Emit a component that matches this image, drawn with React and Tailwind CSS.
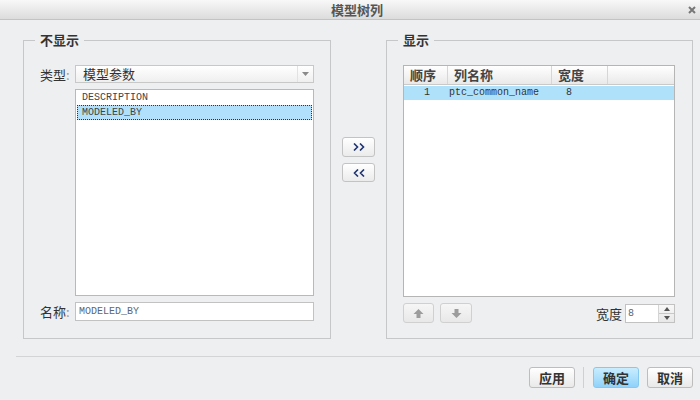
import React from 'react';

const cjk = "font-['Noto_Sans_CJK_SC','Liberation_Sans',sans-serif]";
const mono = "font-['Liberation_Mono','Noto_Sans_CJK_SC',monospace]";

const ArrowIcon = ({ down }) => (
  <svg width="11" height="11" viewBox="0 0 11 11" className={down ? 'rotate-180' : ''}>
    <path d="M5.5 1 L10.5 6 H7.5 V10 H3.5 V6 H0.5 Z" fill="#9c9c9c" />
  </svg>
);

const Button = ({ children, primary = false }) => (
  <button
    className={`h-[21px] w-[46px] rounded-[3px] border text-[13px] font-bold leading-none ${
      primary
        ? 'border-[#86c9ee] bg-gradient-to-b from-[#c9edfe] to-[#8fd2fa] text-[#333]'
        : 'border-[#bdbdbd] bg-gradient-to-b from-white to-[#e9e9e9] text-[#333]'
    }`}
  >
    {children}
  </button>
);

const Chevrons = ({ left }) => (
  <svg width="12" height="8" viewBox="0 0 12 8">
    {left ? (
      <path d="M5 0.5 L1.5 4 L5 7.5 M11 0.5 L7.5 4 L11 7.5" stroke="#1f3370" strokeWidth="1.6" fill="none" />
    ) : (
      <path d="M1 0.5 L4.5 4 L1 7.5 M7 0.5 L10.5 4 L7 7.5" stroke="#1f3370" strokeWidth="1.6" fill="none" />
    )}
  </svg>
);

const App = () => {
  return (
    <div className={`w-[700px] h-[400px] bg-[#eeeff1] flex flex-col text-[13px] text-[#333] ${cjk}`}>
      {/* barra de título */}
      <div className="h-[20px] grid grid-cols-[1fr_auto_1fr] items-center bg-gradient-to-b from-[#f8f8f8] to-[#dcdcdc] border-b border-[#c3c3c3]">
        <div />
        <div className="pl-[14px] text-[13px] font-bold leading-none text-[#555]">模型树列</div>
        <div className="flex justify-end pr-[4px]">
          <svg width="8" height="8" viewBox="0 0 8 8">
            <path d="M1 1 L7 7 M7 1 L1 7" stroke="#777" strokeWidth="2" />
          </svg>
        </div>
      </div>

      <div className="flex pl-[23px] pt-[12px]">
        {/* no mostrar */}
        <fieldset className="w-[308px] h-[307px] border border-[#c6c7c9] px-[16px]">
          <legend className="-ml-[5px] px-[5px] text-[13px] font-bold leading-[16px] text-[#333]">不显示</legend>
          <div className="pt-[17px] flex flex-col">
            <div className="flex items-center">
              <div className="w-[35px] text-[13px] leading-none">
                类型<span className="text-[#999]">:</span>
              </div>
              <div className="flex-1 h-[18px] flex border border-[#c8c8c8] bg-gradient-to-b from-white to-[#efefef]">
                <div className="flex-1 pl-[7px] text-[13px] leading-[16px]">模型参数</div>
                <div className="w-[16px] flex items-center justify-center border-l border-[#e2e2e2]">
                  <svg width="7" height="4" viewBox="0 0 7 4">
                    <path d="M0 0 H7 L3.5 4 Z" fill="#8a8a8a" />
                  </svg>
                </div>
              </div>
            </div>

            <div className="ml-[35px] mt-[6px] h-[207px] border border-[#b9b9b9] bg-white p-[1px]">
              <div className={`h-[14px] pl-[5px] text-[10px] leading-[14px] text-[#444] ${mono}`}>DESCRIPTION</div>
              <div className={`h-[15px] pl-[4px] border border-dotted border-[#333] bg-[#b0e0fb] text-[10px] leading-[13px] text-[#444] ${mono}`}>
                MODELED_BY
              </div>
            </div>

            <div className="flex items-center mt-[6px]">
              <div className="w-[35px] text-[13px] leading-none">
                名称<span className="text-[#999]">:</span>
              </div>
              <div className={`flex-1 h-[19px] border border-[#c2c2c2] bg-white pl-[3px] text-[10px] leading-[17px] text-[#56677a] ${mono}`}>
                MODELED_BY
              </div>
            </div>
          </div>
        </fieldset>

        {/* flechas del centro */}
        <div className="w-[55px] flex flex-col items-center pt-[105px] gap-[6px]">
          <button className="w-[33px] h-[20px] rounded-[3px] border border-[#c3c3c3] bg-gradient-to-b from-white to-[#ebebeb] flex items-center justify-center">
            <Chevrons />
          </button>
          <button className="w-[33px] h-[19px] rounded-[3px] border border-[#c3c3c3] bg-gradient-to-b from-white to-[#ebebeb] flex items-center justify-center">
            <Chevrons left />
          </button>
        </div>

        {/* mostrar */}
        <fieldset className="w-[307px] h-[307px] border border-[#c6c7c9] pl-[16px] pr-[17px]">
          <legend className="-ml-[5px] px-[5px] text-[13px] font-bold leading-[16px] text-[#333]">显示</legend>
          <div className="pt-[17px] flex flex-col">
            <div className="h-[232px] border border-[#b5b5b5] bg-white">
              <div className="grid grid-cols-[44px_104px_56px_1fr] h-[19px] bg-gradient-to-b from-white to-[#e9e9e9] border-b border-[#c9c9c9] text-[13px] font-bold leading-[18px] text-[#444]">
                <div className="pl-[6px] border-r border-[#d6d6d6]">顺序</div>
                <div className="pl-[6px] border-r border-[#d6d6d6]">列名称</div>
                <div className="pl-[6px] border-r border-[#d6d6d6]">宽度</div>
                <div />
              </div>
              <div className={`grid grid-cols-[44px_104px_56px_1fr] h-[14px] mt-[1px] bg-[#b0e1fb] text-[10px] leading-[14px] text-[#333] ${mono}`}>
                <div className="pl-[20px]">1</div>
                <div className="pl-[1px]">ptc_common_name</div>
                <div className="pl-[14px]">8</div>
                <div />
              </div>
            </div>

            <div className="flex items-center mt-[6px] h-[20px]">
              <div className="w-[31px] h-[20px] rounded-[3px] border border-[#d0d0d0] bg-gradient-to-b from-[#f6f6f6] to-[#e8e8e8] flex items-center justify-center">
                <ArrowIcon />
              </div>
              <div className="ml-[6px] w-[32px] h-[20px] rounded-[3px] border border-[#d0d0d0] bg-gradient-to-b from-[#f6f6f6] to-[#e8e8e8] flex items-center justify-center">
                <ArrowIcon down />
              </div>
              <div className="flex-1" />
              <div className="text-[13px] leading-none mr-[3px]">宽度</div>
              <div className="w-[50px] h-[19px] flex border border-[#c2c2c2] bg-white">
                <div className={`flex-1 pl-[2px] text-[10px] leading-[17px] text-[#56677a] ${mono}`}>8</div>
                <div className="w-[16px] flex flex-col border-l border-[#d4d4d4] bg-gradient-to-b from-[#f8f8f8] to-[#e8e8e8]">
                  <div className="flex-1 flex items-center justify-center border-b border-[#c8c8c8]">
                    <svg width="6" height="4" viewBox="0 0 6 4"><path d="M3 0 L6 4 H0 Z" fill="#555" /></svg>
                  </div>
                  <div className="flex-1 flex items-center justify-center">
                    <svg width="6" height="4" viewBox="0 0 6 4"><path d="M0 0 H6 L3 4 Z" fill="#555" /></svg>
                  </div>
                </div>
              </div>
            </div>
          </div>
        </fieldset>
      </div>

      {/* separador */}
      <div className="ml-[16px] mt-[17px] border-t border-[#d3d4d6] h-[1px] bg-[#fafafa]" />

      <div className="flex items-center justify-end pr-[7px] mt-[10px]">
        <Button>应用</Button>
        <div className="ml-[8px] mr-[9px] w-[1px] h-[21px] bg-[#d0d0d0]" />
        <Button primary>确定</Button>
        <div className="ml-[8px]" />
        <Button>取消</Button>
      </div>
    </div>
  );
};

export default App;
